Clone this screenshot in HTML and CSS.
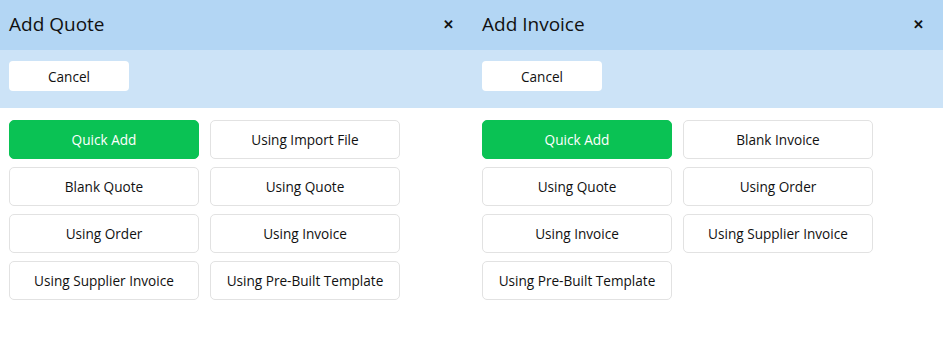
FILE: index.html
```html
<!DOCTYPE html>
<html lang="en">
<head>
    <meta charset="UTF-8">
    <title>Add Quote / Add Invoice</title>
    <link rel="stylesheet" href="styles.css">
</head>
<body>
    <div class="panels">
        <!-- Quote -->
        <div class="panel">
            <div class="panel-header">
                <h1>Add Quote</h1>
                <span class="close">&#x2715;</span>
            </div>
            <div class="panel-actions">
                <button class="cancel-button">Cancel</button>
            </div>
            <div class="option-grid">
                <button class="option primary">Quick Add</button>
                <button class="option">Using Import File</button>
                <button class="option">Blank Quote</button>
                <button class="option">Using Quote</button>
                <button class="option">Using Order</button>
                <button class="option">Using Invoice</button>
                <button class="option">Using Supplier Invoice</button>
                <button class="option">Using Pre-Built Template</button>
            </div>
        </div>

        <!-- Invoice -->
        <div class="panel">
            <div class="panel-header">
                <h1>Add Invoice</h1>
                <span class="close">&#x2715;</span>
            </div>
            <div class="panel-actions">
                <button class="cancel-button">Cancel</button>
            </div>
            <div class="option-grid">
                <button class="option primary">Quick Add</button>
                <button class="option">Blank Invoice</button>
                <button class="option">Using Quote</button>
                <button class="option">Using Order</button>
                <button class="option">Using Invoice</button>
                <button class="option">Using Supplier Invoice</button>
                <button class="option">Using Pre-Built Template</button>
            </div>
        </div>
    </div>
</body>
</html>
```

FILE: styles.css
```css
* {
    margin: 0;
    padding: 0;
    box-sizing: border-box;
}

body {
    font-family: "Open Sans", "Liberation Sans", sans-serif;
    color: #111;
    background: #fff;
}

.panels {
    display: grid;
    grid-template-columns: 473px 470px;
}

/* ヘッダー */
.panel-header {
    height: 50px;
    background: #b3d6f4;
    display: flex;
    align-items: center;
    justify-content: space-between;
    padding: 0 19px 2px 9px;
}

.panel-header h1 {
    font-size: 19px;
    font-weight: 400;
}

.close {
    font-size: 13px;
    font-weight: 700;
}

.panel-actions {
    height: 58px;
    background: #cce3f7;
    padding: 11px 9px;
}

button {
    font-family: inherit;
    font-size: 13.6px;
    color: #111;
    background: #fff;
    cursor: pointer;
}

.cancel-button {
    width: 120px;
    height: 30px;
    border: none;
    border-radius: 4px;
}

/* 選択肢ボタン */
.option-grid {
    display: grid;
    grid-template-columns: 190px 190px;
    column-gap: 11px;
    row-gap: 8px;
    padding: 12px 9px;
}

.option {
    height: 39px;
    border: 1px solid #e2e2e2;
    border-radius: 5px;
}

.option.primary {
    background: #0ac254;
    border-color: #0ac254;
    color: #fff;
}
```
